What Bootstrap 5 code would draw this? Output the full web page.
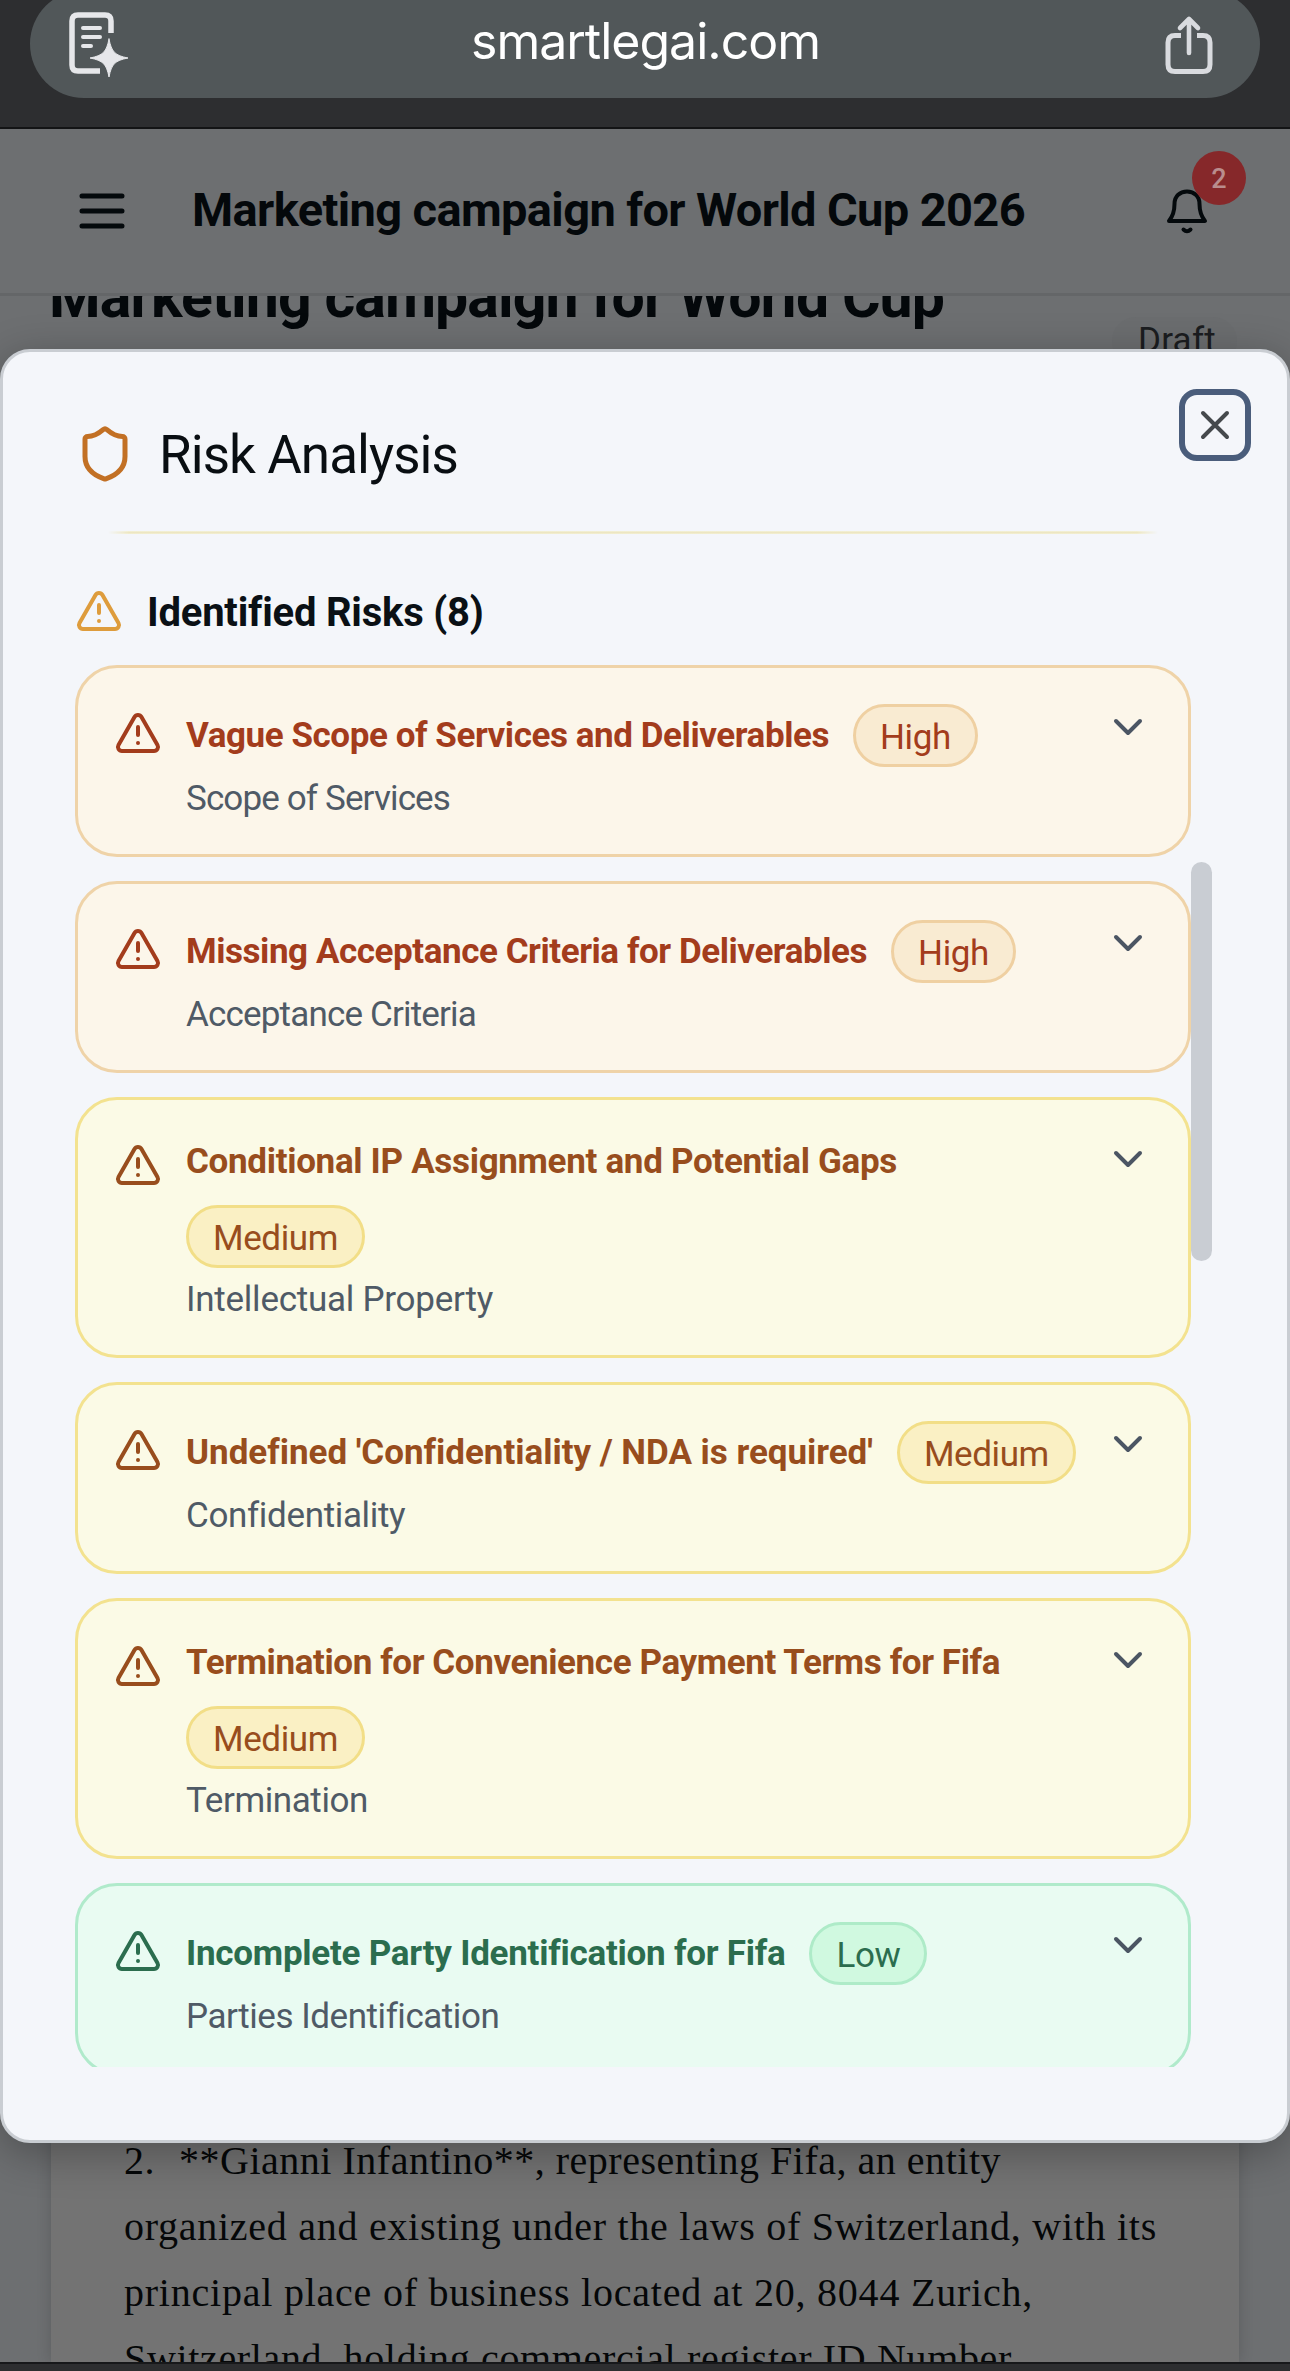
<!DOCTYPE html>
<html lang="en">
<head>
<meta charset="utf-8">
<title>Risk Analysis</title>
<link href="https://cdn.jsdelivr.net/npm/bootstrap@5.3.0/dist/css/bootstrap.min.css" rel="stylesheet">
<style>
  body { font-family: Roboto, "Open Sans", sans-serif; background: #6d6f71; color: #04080b; height: 2371px; overflow: hidden; }
  svg { display: block; flex: none; }
  .ico { fill: none; stroke: currentColor; stroke-width: 2; stroke-linecap: round; stroke-linejoin: round; }
  [data-w] { display: inline-block; white-space: nowrap; }
  .screen { height: 2371px; overflow: hidden; }

  .url-zone { height: 129px; background: #2d2e30; border-bottom: 2px solid #131415; }
  .url-clip { height: 98px; overflow: hidden; }
  .url-pill { height: 108px; margin: -10px 30px 0; padding: 0 44px 0 37px; background: #515759; border-radius: 54px; }
  .url-text { font-family: Inter, Roboto, sans-serif; font-size: 50px; line-height: 60px; color: #fff; margin-bottom: 6px; }
  .page-icon { margin-top: 8px; }

  .app-bar { height: 167px; border-bottom: 3px solid #646668; padding: 0 80px 0 78px; }
  .app-title { font-size: 47px; font-weight: 700; line-height: 60px; margin: 0 0 3px 66px; }
  .bell-box { width: 46px; height: 46px; }
  .bell-count { width: 54px; height: 54px; left: 28px; top: -37px; background: #86282a; color: #b98d8d; font-size: 27px; font-weight: 500; padding-top: 2px; }

  .doc-head { height: 104px; overflow: hidden; padding: 0 53px 0 49px; }
  .doc-title { font-size: 59px; font-weight: 700; line-height: 72px; margin-top: -35px; }
  .draft-tag { font-size: 35px; line-height: 48px; color: #1b1d20; margin-top: 21px; padding: 0 21px 0 26px; background: #6b6d6f; border-radius: 24px; }
  .paper { margin: 1684px 51px 0; height: 278px; overflow: hidden; background: #737373; box-shadow: 0 0 14px rgba(0,0,0,.16); padding: 44px 73px 0; font-family: "Liberation Serif", serif; font-size: 40px; line-height: 66px; color: #050708; }
  .paper-line { height: 66px; }
  .bottom-bar { height: 9px; background: #2d2e30; border-top: 2px solid #17181a; }

  .risk-modal { left: 0; top: 349px; width: 1290px; height: 1794px; background: #f4f6fa; border: 3px solid #c9cdd2; border-radius: 30px; box-shadow: 0 10px 44px rgba(0,0,0,.3); padding: 37px 0 0 72px; }
  .modal-top { height: 176px; padding-right: 36px; }
  .modal-name { font-size: 53px; line-height: 66px; color: #090e12; margin: 33px 0 0 24px; }
  .shield { color: #c27024; margin-top: 35px; }
  .close-box { width: 72px; height: 72px; border: 6px solid #4a5d7b; border-radius: 18px; background: #f4f6fa; color: #45494c; }
  .rule { width: 1050px; height: 3px; margin: -34px 0 0 33px; background: linear-gradient(#f4f3da, #ebe3bd 60%, #f4f3da); -webkit-mask-image: linear-gradient(90deg, transparent, #000 2%, #000 98%, transparent); mask-image: linear-gradient(90deg, transparent, #000 2%, #000 98%, transparent); }
  .risk-heading { margin-top: 47px; height: 60px; color: #0a1015; font-size: 40px; font-weight: 700; line-height: 60px; }
  .risk-heading span { padding-top: 3px; }
  .heading-ico { color: #de9c3c; }
  .risk-list { width: 1116px; height: 1402px; margin-top: 24px; overflow: hidden; gap: 24px; }
  .risk-item { flex: none; height: 192px; border: 3px solid; border-radius: 42px; padding: 36px; gap: 24px; }
  .risk-item.tall { height: 261px; }
  .ico-warn { margin-top: 5px; }
  .risk-name { font-size: 35px; font-weight: 700; line-height: 63px; height: 63px; }
  .tall .risk-name { height: 54px; line-height: 52px; }
  .risk-tag { height: 63px; border: 3px solid; border-radius: 32px; padding: 0 24px; font-size: 35px; line-height: 61px; }
  .risk-tag span { height: 57px; }
  .risk-line { column-gap: 24px; row-gap: 15px; }
  .risk-kind { font-size: 35px; line-height: 48px; margin-top: 8px; color: #4f5a66; }
  .chev { color: #4b5563; margin-top: -1px; }
  .lvl-high { background: #fcf6ea; border-color: #efd3a8; color: #a33c1c; }
  .lvl-high .risk-tag { background: #f9ebd2; border-color: #efd0a2; }
  .lvl-medium { background: #fbfae6; border-color: #f3e28f; color: #984d1d; }
  .lvl-medium .risk-tag { background: #faf0c4; border-color: #f2de87; }
  .lvl-low { background: #e9fbf2; border-color: #b0eacb; color: #2b6d4e; }
  .lvl-low .risk-tag { background: #d0f9e0; border-color: #aeebc8; }
  .thumb { left: 1188px; top: 510px; width: 21px; height: 399px; border-radius: 11px; background: #c9cdd3; }
</style>
<script src="https://cdn.jsdelivr.net/npm/bootstrap@5.3.0/dist/js/bootstrap.bundle.min.js"></script>
</head>
<body>
<svg width="0" height="0" class="position-absolute">
  <symbol id="warn" viewBox="0 0 24 24"><path d="m21.73 18-8-14a2 2 0 0 0-3.48 0l-8 14A2 2 0 0 0 4 21h16a2 2 0 0 0 1.730-3"/><path d="M12 9v4"/><path d="M12 17h.01"/></symbol>
  <symbol id="chev" viewBox="0 0 24 24"><path d="m6 9 6 6 6-6"/></symbol>
</svg>
<div class="screen d-flex flex-column position-relative">
  <div class="url-zone flex-shrink-0">
    <div class="url-clip">
      <div class="url-pill d-flex align-items-center justify-content-between">
        <svg class="page-icon" width="62" height="82" viewBox="0 0 62 82" fill="none" stroke="#e6e7ea" stroke-linecap="round">
          <path d="M44 26V14q0-6-6-6H11q-6 0-6 6v44q0 6 6 6h22" stroke-width="5.500" stroke-linecap="butt"/>
          <path d="M16 21h17M16 30h17M16 39h8" stroke-width="4"/>
          <path d="M42 32c2.500 13 6 16.500 19 19c-13 2.500-16.500 6-19 19c-2.500-13-6-16.500-19-19c13-2.500 16.500-6 19-19z" fill="#e6e7ea" stroke-width="1" stroke-linejoin="round"/>
        </svg>
        <div class="url-text"><span data-w="349">smartlegai.com</span></div>
        <svg width="54" height="66" viewBox="0 0 54 66" fill="none" stroke="#d9dbdf" stroke-width="5" stroke-linecap="round" stroke-linejoin="round">
          <path d="M19 24.500h-6q-7 0-7 7v22q0 7 7 7h28q7 0 7-7v-22q0-7-7-7h-6" stroke-linecap="butt"/>
          <path d="M27 42V9M18 17l9-9 9 9" stroke-width="4.600"/>
        </svg>
      </div>
    </div>
  </div>

  <div class="app-bar d-flex align-items-center flex-shrink-0">
    <svg width="48" height="40" viewBox="0 0 48 40" stroke="#04090c" stroke-width="5" stroke-linecap="round"><path d="M4 5h40M4 20h40M4 35h40"/></svg>
    <div class="app-title"><span data-w="833">Marketing campaign for World Cup 2026</span></div>
    <div class="bell-box position-relative ms-auto">
      <svg width="46" height="46" viewBox="0 0 46 46" fill="none" stroke="#04090c" stroke-width="4" stroke-linejoin="round" stroke-linecap="round">
        <path d="M5 33C9 28 10.500 23 10.500 16C10.500 8 16 3.500 23 3.500S35.500 8 35.500 16C35.500 23 37 28 41 33z"/><path d="M19.500 41.500q3.500 3.500 7 0"/>
      </svg>
      <div class="bell-count position-absolute rounded-circle d-flex align-items-center justify-content-center">2</div>
    </div>
  </div>

  <div class="doc-head d-flex justify-content-between align-items-start flex-shrink-0">
    <div class="doc-title"><span data-w="895">Marketing campaign for World Cup</span></div>
    <div class="draft-tag"><span data-w="78">Draft</span></div>
  </div>

  <div class="paper flex-shrink-0">
    <div class="paper-line d-flex"><span class="me-4" data-w="31">2.</span><span data-w="822">**Gianni Infantino**, representing Fifa, an entity</span></div>
    <div class="paper-line"><span data-w="1033">organized and existing under the laws of Switzerland, with its</span></div>
    <div class="paper-line"><span data-w="909">principal place of business located at 20, 8044 Zurich,</span></div>
    <div class="paper-line"><span data-w="888">Switzerland, holding commercial register ID Number</span></div>
  </div>
  <div class="bottom-bar flex-shrink-0"></div>

  <div class="risk-modal position-absolute">
    <div class="modal-top d-flex align-items-start">
      <svg class="ico shield" width="60" height="60" viewBox="0 0 24 24"><path d="M20 13c0 5-3.500 7.500-7.660 8.950a1 1 0 0 1-.67-.01C7.500 20.500 4 18 4 13V6a1 1 0 0 1 1-1c2 0 4.500-1.200 6.240-2.720a1.170 1.170 0 0 1 1.520 0C14.510 3.810 17 5 19 5a1 1 0 0 1 1 1z"/></svg>
      <div class="modal-name"><span data-w="299">Risk Analysis</span></div>
      <div class="close-box d-flex align-items-center justify-content-center ms-auto">
        <svg width="30" height="30" viewBox="0 0 30 30" stroke="currentColor" stroke-width="4" stroke-linecap="round"><path d="M3 3l24 24M27 3L3 27"/></svg>
      </div>
    </div>
    <div class="rule"></div>
    <div class="risk-heading d-flex align-items-center gap-4">
      <svg class="ico heading-ico" width="48" height="48"><use href="#warn"/></svg>
      <span data-w="336">Identified Risks (8)</span>
    </div>
    <div class="risk-list d-flex flex-column">
      <div class="risk-item lvl-high d-flex align-items-start">
        <svg class="ico ico-warn" width="48" height="48"><use href="#warn"/></svg>
        <div class="flex-grow-1">
          <div class="risk-line d-flex flex-wrap align-items-center"><span class="risk-name" data-w="643">Vague Scope of Services and Deliverables</span><span class="risk-tag"><span data-w="71">High</span></span></div>
          <div class="risk-kind"><span data-w="264">Scope of Services</span></div>
        </div>
        <svg class="ico chev" width="48" height="48"><use href="#chev"/></svg>
      </div>
      <div class="risk-item lvl-high d-flex align-items-start">
        <svg class="ico ico-warn" width="48" height="48"><use href="#warn"/></svg>
        <div class="flex-grow-1">
          <div class="risk-line d-flex flex-wrap align-items-center"><span class="risk-name" data-w="681">Missing Acceptance Criteria for Deliverables</span><span class="risk-tag"><span data-w="71">High</span></span></div>
          <div class="risk-kind"><span data-w="290">Acceptance Criteria</span></div>
        </div>
        <svg class="ico chev" width="48" height="48"><use href="#chev"/></svg>
      </div>
      <div class="risk-item tall lvl-medium d-flex align-items-start">
        <svg class="ico ico-warn" width="48" height="48"><use href="#warn"/></svg>
        <div class="flex-grow-1">
          <div class="risk-line d-flex flex-wrap align-items-center"><span class="risk-name" data-w="711">Conditional IP Assignment and Potential Gaps</span><span class="risk-tag"><span data-w="125">Medium</span></span></div>
          <div class="risk-kind"><span data-w="307">Intellectual Property</span></div>
        </div>
        <svg class="ico chev" width="48" height="48"><use href="#chev"/></svg>
      </div>
      <div class="risk-item lvl-medium d-flex align-items-start">
        <svg class="ico ico-warn" width="48" height="48"><use href="#warn"/></svg>
        <div class="flex-grow-1">
          <div class="risk-line d-flex flex-wrap align-items-center"><span class="risk-name" data-w="686">Undefined 'Confidentiality / NDA is required'</span><span class="risk-tag"><span data-w="125">Medium</span></span></div>
          <div class="risk-kind"><span data-w="218">Confidentiality</span></div>
        </div>
        <svg class="ico chev" width="48" height="48"><use href="#chev"/></svg>
      </div>
      <div class="risk-item tall lvl-medium d-flex align-items-start">
        <svg class="ico ico-warn" width="48" height="48"><use href="#warn"/></svg>
        <div class="flex-grow-1">
          <div class="risk-line d-flex flex-wrap align-items-center"><span class="risk-name" data-w="814">Termination for Convenience Payment Terms for Fifa</span><span class="risk-tag"><span data-w="125">Medium</span></span></div>
          <div class="risk-kind"><span data-w="182">Termination</span></div>
        </div>
        <svg class="ico chev" width="48" height="48"><use href="#chev"/></svg>
      </div>
      <div class="risk-item lvl-low d-flex align-items-start">
        <svg class="ico ico-warn" width="48" height="48"><use href="#warn"/></svg>
        <div class="flex-grow-1">
          <div class="risk-line d-flex flex-wrap align-items-center"><span class="risk-name" data-w="599">Incomplete Party Identification for Fifa</span><span class="risk-tag"><span data-w="64">Low</span></span></div>
          <div class="risk-kind"><span data-w="312">Parties Identification</span></div>
        </div>
        <svg class="ico chev" width="48" height="48"><use href="#chev"/></svg>
      </div>
    </div>
    <div class="thumb position-absolute"></div>
  </div>
</div>
<script>
  // Tracks each label out or in so that it fills its data-w width.
  document.querySelectorAll('[data-w]').forEach(function (el) {
    var natural = el.getBoundingClientRect().width;
    el.style.letterSpacing = ((el.dataset.w - natural) / el.textContent.length).toFixed(3) + 'px';
  });
</script>
</body>
</html>
